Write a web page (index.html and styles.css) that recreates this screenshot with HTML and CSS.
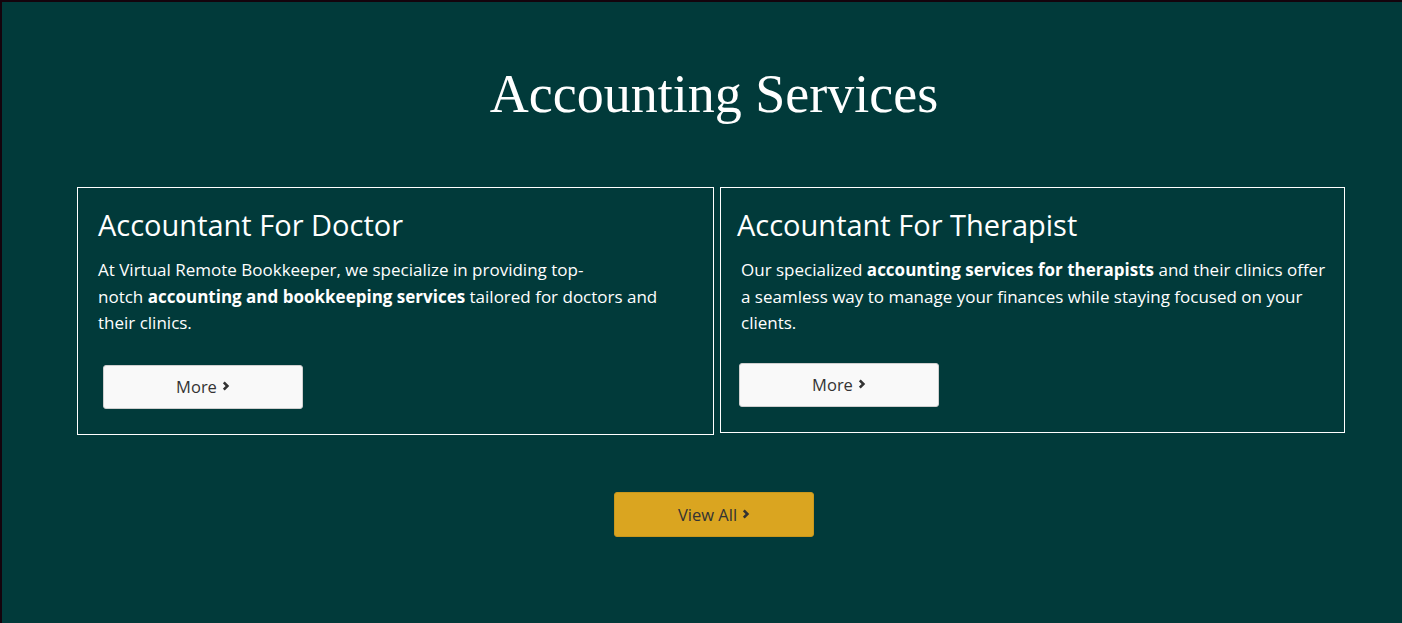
FILE: index.html
```html
<!DOCTYPE html>
<html lang="en">
<head>
<meta charset="utf-8">
<title>Accounting Services</title>
<link rel="stylesheet" href="styles.css">
</head>
<body>
<section class="services">
  <div class="wrap">
    <h1 class="title">Accounting Services</h1>
    <div class="cards">
      <article class="card card--doctor">
        <h2 class="card-title">Accountant For Doctor</h2>
        <p class="card-text">At Virtual Remote Bookkeeper, we specialize in providing top-<br>notch <strong>accounting and bookkeeping services</strong> tailored for doctors and<br>their clinics.</p>
        <a class="btn btn--light" href="#">More <svg class="chev" viewBox="0 0 8 10" width="8" height="10"><path d="M1.8 1.4 L5.4 5 L1.8 8.6" fill="none" stroke="currentColor" stroke-width="2.6" stroke-linejoin="miter"/></svg></a>
      </article>
      <article class="card card--therapist">
        <h2 class="card-title">Accountant For Therapist</h2>
        <p class="card-text">Our specialized <strong>accounting services for therapists</strong> and their clinics offer<br>a seamless way to manage your finances while staying focused on your<br>clients.</p>
        <a class="btn btn--light" href="#">More <svg class="chev" viewBox="0 0 8 10" width="8" height="10"><path d="M1.8 1.4 L5.4 5 L1.8 8.6" fill="none" stroke="currentColor" stroke-width="2.6" stroke-linejoin="miter"/></svg></a>
      </article>
    </div>
    <div class="actions">
      <a class="btn btn--gold" href="#">View All <svg class="chev" viewBox="0 0 8 10" width="8" height="10"><path d="M1.8 1.4 L5.4 5 L1.8 8.6" fill="none" stroke="currentColor" stroke-width="2.6" stroke-linejoin="miter"/></svg></a>
    </div>
  </div>
</section>
</body>
</html>
```
FILE: styles.css
```css
* { box-sizing: border-box; }
html, body { margin: 0; padding: 0; }
html { background: #013a3a; }
body {
  background: #013a3a;
  border-top: 2px solid #14030c;
  border-left: 2px solid #14030c;
  height: 623px;
  overflow: hidden;
  color: #ffffff;
  font-family: "Open Sans", "Liberation Sans", sans-serif;
}
.services {
  padding: 61px 0 60px;
}
.wrap {
  margin-left: 75px;
  width: 1274px;
}
.title {
  margin: 0;
  text-align: center;
  font-family: "Liberation Serif", serif;
  font-weight: 400;
  font-size: 54px;
  line-height: 62px;
  color: #ffffff;
}
.cards {
  margin-top: 62px;
  display: grid;
  grid-template-columns: 637px 625px;
  gap: 6px;
  align-items: start;
}
.card {
  border: 1px solid #ffffff;
  padding: 20px 20px 25px;
}
.card--therapist {
  padding-left: 16px;
}
.card-title {
  margin: 0;
  font-family: "Open Sans", sans-serif;
  font-weight: 400;
  font-size: 29px;
  line-height: 34px;
  color: #ffffff;
}
.card-text {
  margin: 15px 0 0;
  font-size: 17px;
  line-height: 26.5px;
  color: #ffffff;
  white-space: nowrap;
}
.card-text strong { font-weight: 700; }
.card--therapist .card-text { padding-left: 4px; }
.btn {
  display: flex;
  align-items: center;
  justify-content: center;
  gap: 5px;
  width: 200px;
  height: 44px;
  border-radius: 3px;
  text-decoration: none;
  color: #333333;
  font-size: 16.5px;
}
.btn--light {
  margin-top: 28px;
  margin-left: 5px;
  background: #f9f9f9;
  border: 1px solid #cfcfcf;
}
.card--therapist .btn--light {
  margin-top: 26px;
  margin-left: 2px;
}
.chev { display: block; margin-top: -1px; }
.actions {
  margin-top: 57px;
  display: flex;
  justify-content: center;
}
.btn--gold {
  height: 45px;
  background: #daa520;
  border: 1px solid #c9971c;
  color: #333333;
}
```
